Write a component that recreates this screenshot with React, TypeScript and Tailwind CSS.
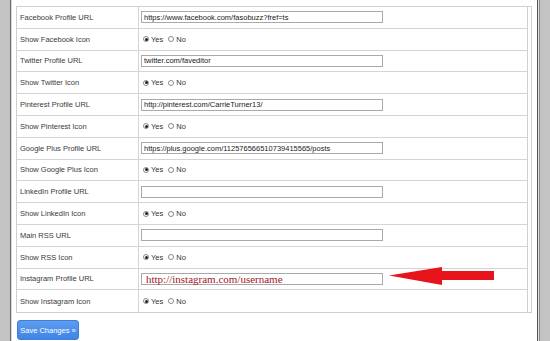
import React from 'react';

type Row =
  | { label: string; kind: 'url'; value: string }
  | { label: string; kind: 'radio' };

const ROWS: Row[] = [
  { label: 'Facebook Profile URL', kind: 'url', value: 'https://www.facebook.com/fasobuzz?fref=ts' },
  { label: 'Show Facebook Icon', kind: 'radio' },
  { label: 'Twitter Profile URL', kind: 'url', value: 'twitter.com/faveditor' },
  { label: 'Show Twitter Icon', kind: 'radio' },
  { label: 'Pinterest Profile URL', kind: 'url', value: 'http://pinterest.com/CarrieTurner13/' },
  { label: 'Show Pinterest Icon', kind: 'radio' },
  { label: 'Google Plus Profile URL', kind: 'url', value: 'https://plus.google.com/112576566510739415565/posts' },
  { label: 'Show Google Plus Icon', kind: 'radio' },
  { label: 'LinkedIn Profile URL', kind: 'url', value: '' },
  { label: 'Show LinkedIn Icon', kind: 'radio' },
  { label: 'Main RSS URL', kind: 'url', value: '' },
  { label: 'Show RSS Icon', kind: 'radio' },
  { label: 'Instagram Profile URL', kind: 'url', value: '' },
  { label: 'Show Instagram Icon', kind: 'radio' },
];

function Radio({ checked }: { checked?: boolean }) {
  return (
    <span className="w-[6px] h-[6px] rounded-full border border-[#8a8a8a] bg-white flex items-center justify-center">
      {checked && <span className="w-[3px] h-[3px] rounded-full bg-[#222]" />}
    </span>
  );
}

export default function App() {
  return (
    <div
      className="w-[550px] h-[341px] flex bg-white overflow-hidden text-[#333]"
      style={{ fontFamily: '"Liberation Sans", Arial, sans-serif' }}
    >
      {/* left chrome */}
      <div className="w-[10px] bg-[#c3c3c3]" />
      <div className="w-[1px] bg-[#6a6a6a]" />
      <div className="w-[1px] bg-[#d9d9d9]" />

      {/* content */}
      <div className="flex-1 pl-[4px] pt-[6px] pr-[5px]">
        <div className="border border-[#cfcfcf] pr-[3px]">
          <div className="border-r border-[#cfcfcf]">
            {ROWS.map((row, i) => (
              <div
                key={row.label}
                className={`flex h-[21.8px] ${i < ROWS.length - 1 ? 'border-b border-[#d4d4d4]' : ''}`}
              >
                <div className="w-[122px] border-r border-[#d4d4d4] flex items-center pl-[3px] text-[7.5px] text-[#3a3a3a]">
                  {row.label}
                </div>
                <div className="flex-1 flex items-center pl-[2px] relative">
                  {row.kind === 'url' ? (
                    <div className="w-[242px] h-[12px] border border-[#a9a9a9] bg-white flex items-center px-[2px] text-[7.5px] text-[#222] whitespace-nowrap overflow-hidden">
                      {row.value}
                    </div>
                  ) : (
                    <div className="flex items-center text-[7.5px] text-[#333] pl-[2px]">
                      <Radio checked />
                      <span className="ml-[2px]">Yes</span>
                      <span className="ml-[5px]" />
                      <Radio />
                      <span className="ml-[2px]">No</span>
                    </div>
                  )}
                  {row.label === 'Instagram Profile URL' && (
                    <>
                      <span
                        className="absolute left-[7px] top-[5px] text-[11px] leading-none text-[#a3161c] whitespace-nowrap"
                        style={{ fontFamily: '"Liberation Serif", "Times New Roman", serif' }}
                      >
                        http://instagram.com/username
                      </span>
                      <svg
                        className="absolute left-[250px] top-[-3px]"
                        width="108"
                        height="22"
                        viewBox="0 0 108 22"
                      >
                        <path
                          d="M0 9.5 L53 1 L53 5 L105 5 L105 14 L53 14 L53 19 Z"
                          fill="#e8141c"
                        />
                      </svg>
                    </>
                  )}
                </div>
              </div>
            ))}
          </div>
        </div>

        <button className="mt-[7px] ml-[1px] w-[62px] h-[20px] rounded-[3px] border border-[#3f7fd6] bg-gradient-to-b from-[#5d9cf0] to-[#3f85e6] text-white text-[7.5px] flex items-center justify-center">
          Save Changes »
        </button>
      </div>

      {/* right chrome */}
      <div className="w-[1px] bg-[#5a5a5a]" />
      <div className="w-[1px] bg-[#e0e0e0]" />
      <div className="w-[1px] bg-[#8a8a8a]" />
      <div className="w-[10px] bg-[#c3c3c3]" />
    </div>
  );
}
